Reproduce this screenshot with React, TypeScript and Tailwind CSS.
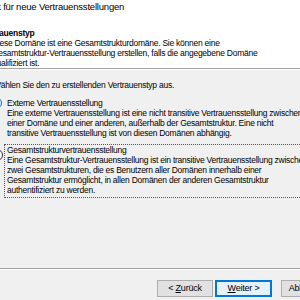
import React from "react";

const font = { fontFamily: '"Liberation Sans", Arial, sans-serif' };

function Radio({ active }: { active?: boolean }) {
  return (
    <span
      className={
        "absolute left-[-17px] top-[-1px] w-[12px] h-[12px] rounded-full border flex items-center justify-center " +
        (active ? "border-[#0078d7] bg-[#e5f1fb]" : "border-[#333333] bg-white")
      }
    >
      {active && <span className="w-[6px] h-[6px] rounded-full bg-[#1a6fc4]" />}
    </span>
  );
}

export default function App() {
  return (
    <div
      className="w-[300px] h-[300px] overflow-hidden bg-[#f0f0f0] text-black flex flex-col text-[8.5px] tracking-[-0.25px]"
      style={font}
    >
      {/* Kopfbereich */}
      <div className="h-[68px] bg-white shrink-0">
        <div className="h-[14px] leading-[14px] text-[9.5px] tracking-[-0.2px] ml-[-36px] whitespace-nowrap">
          Assistent für neue Vertrauensstellungen
        </div>
        <div className="mt-[14px] h-[10px] leading-[10px] font-bold ml-[-19px] whitespace-nowrap">
          Vertrauenstyp
        </div>
        <div className="ml-[-8px] leading-[10px] whitespace-nowrap">
          <div>Diese Domäne ist eine Gesamtstrukturdomäne. Sie können eine</div>
          <div>Gesamtstruktur-Vertrauensstellung erstellen, falls die angegebene Domäne</div>
          <div>qualifiziert ist.</div>
        </div>
      </div>
      <div className="h-px bg-[#a0a0a0] shrink-0" />
      <div className="h-px bg-white shrink-0" />

      {/* Inhalt */}
      <div className="h-[198px] shrink-0 leading-[10px] whitespace-nowrap">
        <div className="mt-[10px] ml-[-7px]">
          Wählen Sie den zu erstellenden Vertrauenstyp aus.
        </div>
        <div className="mt-[8px] ml-[7px] relative">
          <Radio active />
          <div>Externe Vertrauensstellung</div>
          <div>Eine externe Vertrauensstellung ist eine nicht transitive Vertrauensstellung zwischen</div>
          <div>einer Domäne und einer anderen, außerhalb der Gesamtstruktur. Eine nicht</div>
          <div>transitive Vertrauensstellung ist von diesen Domänen abhängig.</div>
        </div>
        <div className="mt-[6px] ml-[4px] relative border border-dotted border-[#555555] border-r-0 pl-[2px] pb-[2px]">
          <span className="absolute left-[-14px] top-[4px] w-[12px] h-[12px] rounded-full border border-[#333333] bg-white" />
          <div>Gesamtstrukturvertrauensstellung</div>
          <div>Eine Gesamtstruktur-Vertrauensstellung ist ein transitive Vertrauensstellung zwischen</div>
          <div>zwei Gesamtstrukturen, die es Benutzern aller Domänen innerhalb einer</div>
          <div>Gesamtstruktur ermöglicht, in allen Domänen der anderen Gesamtstruktur</div>
          <div>authentifiziert zu werden.</div>
        </div>
      </div>
      <div className="h-px bg-[#a0a0a0] shrink-0" />
      <div className="h-px bg-white shrink-0" />

      {/* Schaltflächen */}
      <div className="pt-[10px] pl-[157px] flex gap-[2px] whitespace-nowrap text-[9px] tracking-[-0.2px]">
        <button className="w-[56px] h-[17px] shrink-0 border border-[#adadad] bg-[#e1e1e1] leading-[15px] text-center">
          &lt; <span className="underline">Z</span>urück
        </button>
        <button className="w-[57px] h-[17px] shrink-0 border-2 border-[#0078d7] bg-[#e5f1fb] leading-[13px] text-center">
          <span className="underline">W</span>eiter &gt;
        </button>
        <button className="ml-[7px] w-[57px] h-[17px] shrink-0 border border-[#adadad] bg-[#e1e1e1] leading-[15px] text-center">
          Abbrechen
        </button>
      </div>
    </div>
  );
}
